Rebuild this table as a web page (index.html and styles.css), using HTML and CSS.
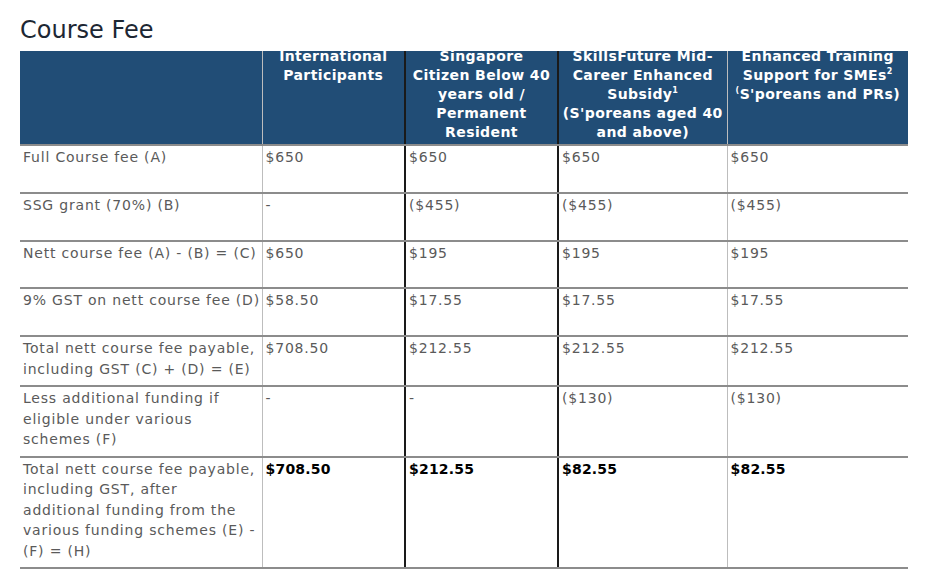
FILE: index.html
```html
<!DOCTYPE html>
<html>
<head>
<meta charset="utf-8">
<link rel="stylesheet" href="styles.css">
</head>
<body>
<h1 class="title">Course Fee</h1>
<table class="fees">
  <colgroup>
    <col class="c0"><col class="c1"><col class="c2"><col class="c3"><col class="c4">
  </colgroup>
  <thead>
    <tr>
      <th class="lt"></th>
      <th class="lt"><div class="hd">International Participants</div></th>
      <th class="dk narrow"><div class="hd">Singapore Citizen Below 40 years old / Permanent Resident</div></th>
      <th class="dk"><div class="hd">SkillsFuture Mid-Career Enhanced Subsidy<sup>1</sup><br>(S'poreans aged 40 and above)</div></th>
      <th class="lt"><div class="hd">Enhanced Training Support for SMEs<sup>2</sup><br><sup>(</sup>S'poreans and PRs)</div></th>
    </tr>
  </thead>
  <tbody>
    <tr class="r48">
      <td class="lt">Full Course fee (A)</td><td class="lt">$650</td><td class="dk">$650</td><td class="dk">$650</td><td class="lt">$650</td>
    </tr>
    <tr class="r48">
      <td class="lt">SSG grant (70%) (B)</td><td class="lt">-</td><td class="dk">($455)</td><td class="dk">($455)</td><td class="lt">($455)</td>
    </tr>
    <tr class="r47">
      <td class="lt">Nett course fee (A) - (B) = (C)</td><td class="lt">$650</td><td class="dk">$195</td><td class="dk">$195</td><td class="lt">$195</td>
    </tr>
    <tr class="r48">
      <td class="lt">9% GST on nett course fee (D)</td><td class="lt">$58.50</td><td class="dk">$17.55</td><td class="dk">$17.55</td><td class="lt">$17.55</td>
    </tr>
    <tr>
      <td class="lt">Total nett course fee payable, including GST (C) + (D) = (E)</td><td class="lt">$708.50</td><td class="dk">$212.55</td><td class="dk">$212.55</td><td class="lt">$212.55</td>
    </tr>
    <tr>
      <td class="lt">Less additional funding if eligible under various schemes (F)</td><td class="lt">-</td><td class="dk">-</td><td class="dk">($130)</td><td class="lt">($130)</td>
    </tr>
    <tr class="last">
      <td class="lt">Total nett course fee payable, including GST, after<br>additional funding from the various funding schemes (E) - (F) = (H)</td><td class="lt strong">$708.50</td><td class="dk strong">$212.55</td><td class="dk strong">$82.55</td><td class="lt strong">$82.55</td>
    </tr>
  </tbody>
</table>
</body>
</html>
```

FILE: styles.css
```css
html, body {
  margin: 0;
  padding: 0;
  background: #fff;
}
body {
  font-family: "DejaVu Sans", "Open Sans", sans-serif;
}
.title {
  margin: 15px 0 0 20px;
  height: 36px;
  font-size: 24px;
  line-height: 30px;
  font-weight: 400;
  color: #1d2733;
  font-family: "DejaVu Sans", sans-serif;
  letter-spacing: 0;
}
.fees {
  margin-left: 20px;
  width: 888px;
  table-layout: fixed;
  border-collapse: collapse;
}
.c0 { width: 242px; }
.c1 { width: 143px; }
.c2 { width: 153px; }
.c3 { width: 169px; }
.c4 { width: 181px; }

.fees th {
  background: #214d76;
  color: #fff;
  font-weight: 700;
  font-size: 14px;
  line-height: 19px;
  height: 93px;
  padding: 0 2px;
  vertical-align: top;
  text-align: center;
  overflow: hidden;
  border-bottom: 2px solid #8c8c8c;
}
.fees th.narrow {
  padding: 0 5px;
}
.hd {
  margin-top: -4px;
  letter-spacing: 0.4px;
}
.fees sup {
  font-size: 8px;
  line-height: 0;
  vertical-align: 6px;
}
.fees td {
  color: #5a5a5a;
  font-size: 14px;
  line-height: 20.5px;
  padding: 1px 1px 6px 3px;
  vertical-align: top;
  border-bottom: 2px solid #8c8c8c;
  letter-spacing: 0.8px;
}
.fees th + th, .fees td + td {
  border-left: 1px solid #bdbdbd;
}
.fees th.dk, .fees td.dk {
  border-left: 2px solid #1a1a1a;
}
.r48 td { height: 39px; }
.r47 td { height: 38px; }
.fees td.strong {
  color: #000;
  font-weight: 700;
  letter-spacing: 0.2px;
}
```
